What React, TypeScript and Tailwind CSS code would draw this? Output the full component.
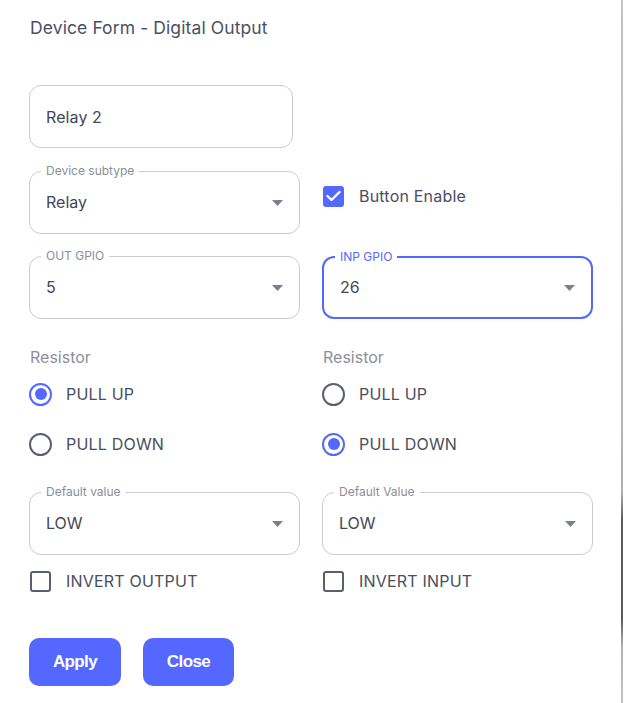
import React from "react";

function Caret() {
  return (
    <svg width="11" height="6" viewBox="0 0 11 6" className="shrink-0">
      <path d="M0 0 L11 0 L5.5 6 Z" fill="#7b8091" />
    </svg>
  );
}

function Select({
  label,
  value,
  focused = false,
}: {
  label: string;
  value: string;
  focused?: boolean;
}) {
  return (
    <div
      className={
        "relative flex h-[63px] items-center justify-between rounded-[12px] pl-[16px] pr-[16px] " +
        (focused
          ? "border-2 border-[#5468ff]"
          : "border border-[#c9cbd1]")
      }
    >
      <span
        className={
          "absolute -top-[9px] left-[11px] bg-white px-[5px] text-[12px] leading-[16px] " +
          (focused ? "left-[10px] text-[#5468ff]" : "text-[#8a8e99]")
        }
      >
        {label}
      </span>
      <span className="-mt-[1px] text-[16px] text-[#434756]">{value}</span>
      <Caret />
    </div>
  );
}

function Radio({ label, checked }: { label: string; checked: boolean }) {
  return (
    <div className="flex h-[24px] items-center gap-[14px]">
      <span
        className={
          "flex h-[23px] w-[23px] items-center justify-center rounded-full border-2 " +
          (checked ? "border-[#5468ff]" : "border-[#5a5f70]")
        }
      >
        {checked && <span className="h-[12px] w-[12px] rounded-full bg-[#5468ff]" />}
      </span>
      <span className="text-[16px] tracking-[0.2px] text-[#4a4e5e]">{label}</span>
    </div>
  );
}

function Check({ label, checked }: { label: string; checked: boolean }) {
  return (
    <div className="flex h-[24px] items-center gap-[15px]">
      <span
        className={
          "flex h-[21px] w-[21px] items-center justify-center rounded-[3px] " +
          (checked ? "bg-[#5468ff]" : "border-2 border-[#5a5f70]")
        }
      >
        {checked && (
          <svg width="15" height="12" viewBox="0 0 15 12">
            <path
              d="M1.5 6 L5.5 10 L13.5 2"
              fill="none"
              stroke="white"
              strokeWidth="2.4"
              strokeLinecap="round"
              strokeLinejoin="round"
            />
          </svg>
        )}
      </span>
      <span className="text-[16px] tracking-[0.2px] text-[#4a4e5e]">{label}</span>
    </div>
  );
}

export default function App() {
  return (
    <div
      className="flex h-[703px] w-[624px] bg-white"
      style={{ fontFamily: "Inter, 'Noto Sans', sans-serif" }}
    >
      <div className="flex-1 pl-[29px] pt-[16px]">
        <h1 className="pl-[1px] text-[17.5px] leading-[24px] tracking-[0.1px] text-[#4a5064]">
          Device Form - Digital Output
        </h1>

        <div className="mt-[45px] flex h-[63px] w-[264px] items-center rounded-[12px] border border-[#c9cbd1] pl-[16px] text-[16px] tracking-[0.1px] text-[#434756]">
          Relay 2
        </div>

        <div className="mt-[23px] grid grid-cols-[271px_271px] gap-x-[22px]">
          <Select label="Device subtype" value="Relay" />
          <div className="pl-[1px] pt-[13px]">
            <Check label="Button Enable" checked />
          </div>
        </div>

        <div className="mt-[22px] grid grid-cols-[271px_271px] gap-x-[22px]">
          <Select label="OUT GPIO" value="5" />
          <Select label="INP GPIO" value="26" focused />
        </div>

        <div className="mt-[26px] grid grid-cols-[271px_271px] gap-x-[22px]">
          <div className="flex flex-col">
            <span className="pl-[1px] text-[16px] leading-[24px] text-[#8c909a]">Resistor</span>
            <div className="mt-[13px] flex flex-col gap-[26px]">
              <Radio label="PULL UP" checked />
              <Radio label="PULL DOWN" checked={false} />
            </div>
          </div>
          <div className="flex flex-col">
            <span className="pl-[1px] text-[16px] leading-[24px] text-[#8c909a]">Resistor</span>
            <div className="mt-[13px] flex flex-col gap-[26px]">
              <Radio label="PULL UP" checked={false} />
              <Radio label="PULL DOWN" checked />
            </div>
          </div>
        </div>

        <div className="mt-[36px] grid grid-cols-[271px_271px] gap-x-[22px]">
          <div>
            <Select label="Default value" value="LOW" />
            <div className="mt-[14px] pl-[1px]">
              <Check label="INVERT OUTPUT" checked={false} />
            </div>
          </div>
          <div>
            <Select label="Default Value" value="LOW" />
            <div className="mt-[14px] pl-[1px]">
              <Check label="INVERT INPUT" checked={false} />
            </div>
          </div>
        </div>

        <div
          className="mt-[45px] flex gap-[22px]"
          style={{ fontFamily: "'Liberation Sans', Arial, sans-serif" }}
        >
          <button className="flex h-[48px] w-[92px] items-center justify-center rounded-[10px] bg-[#5468ff] text-[17px] font-bold tracking-[-0.6px] text-white">
            Apply
          </button>
          <button className="flex h-[48px] w-[91px] items-center justify-center rounded-[10px] bg-[#5468ff] text-[17px] font-bold tracking-[-0.6px] text-white">
            Close
          </button>
        </div>
      </div>
      <div className="mr-[1px] w-[2px] bg-[linear-gradient(to_bottom,#c4c4c4_0%,#b0b0b0_70%,#5a5a5a_74%,#5a5a5a_88%,#b0b0b0_92%,#c4c4c4_100%)]" />
    </div>
  );
}
